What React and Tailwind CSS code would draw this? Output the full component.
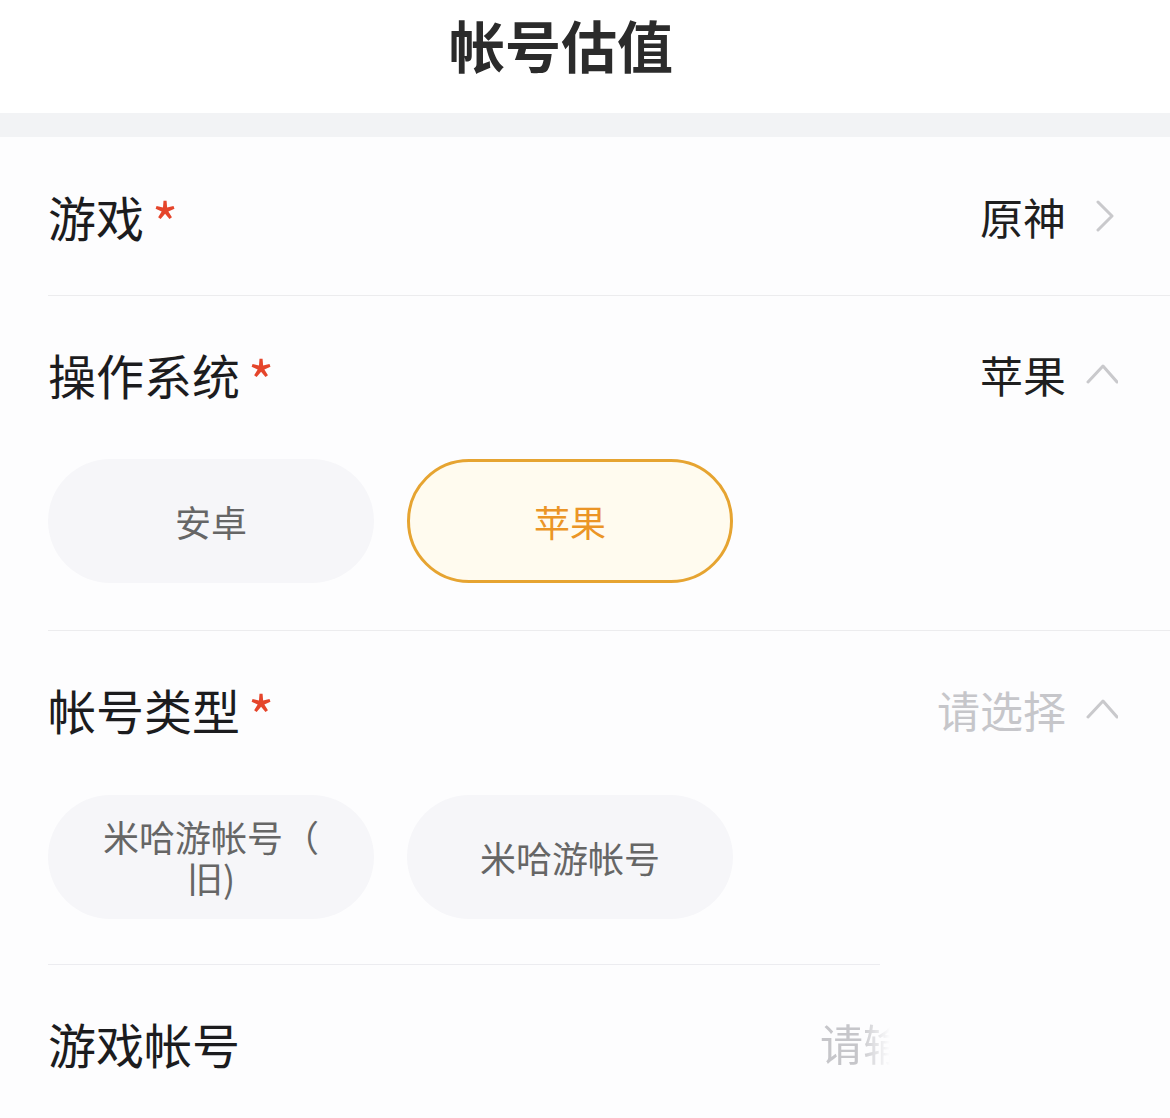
import { useState } from "react"

const ChevronRight = () => (
  <svg width="32" height="32" viewBox="0 0 32 32" fill="none" stroke="#c9c9cc" strokeWidth="3" strokeLinecap="round" strokeLinejoin="round">
    <path d="M12 2 L26 16 L12 30" />
  </svg>
)

const ChevronUp = () => (
  <svg width="32" height="32" viewBox="0 0 32 32" fill="none" stroke="#c9c9cc" strokeWidth="3" strokeLinecap="round" strokeLinejoin="round">
    <path d="M2 24 L17 8 L31 24" />
  </svg>
)

const Label = ({ text, required }) => (
  <div className="flex items-start h-[48px] text-[48px] leading-[48px] text-[#1c1c1e]">
    <span>{text}</span>
    {required && <span className="ml-[8px] mt-[10px] h-[38px] text-[56px] leading-[38px] text-[#e5452b]">*</span>}
  </div>
)

const Pill = ({ children, active, onClick }) => (
  <button
    onClick={onClick}
    className={`w-[326px] h-[124px] rounded-full flex items-center justify-center text-[36px] leading-[41px] text-center ${
      active ? "bg-[#fffbef] border-[3px] border-[#e6a431] text-[#eb9526]" : "bg-[#f6f6f9] text-[#666]"
    }`}
  >
    {children}
  </button>
)

export default function App() {
  const [os, setOs] = useState("苹果")
  const [type, setType] = useState(null)

  return (
    <div className="w-[1170px] h-[1118px] bg-[#fdfdfe] overflow-hidden" style={{ fontFamily: '"Noto Sans CJK SC", "Noto Sans", sans-serif' }}>
      {/* header */}
      <div className="h-[113px] bg-white flex justify-center pt-[12px] pr-[48px]">
        <h1 className="text-[56px] font-bold leading-[64px] text-[#2b2b2b]">帐号估值</h1>
      </div>
      <div className="h-[24px] bg-[#f2f3f5]"></div>

      {/* game */}
      <div className="h-[158px] flex items-center justify-between pl-12 pr-[52px]">
        <Label text="游戏" required />
        <div className="flex items-center gap-[20px]">
          <span className="text-[43px] text-[#1f1f1f]">原神</span>
          <ChevronRight />
        </div>
      </div>
      <div className="ml-12 h-px bg-[#ececee]"></div>

      {/* os */}
      <div className="h-[156px] flex items-center justify-between pl-12 pr-[52px]">
        <Label text="操作系统" required />
        <div className="flex items-center gap-[20px]">
          <span className="text-[43px] text-[#1f1f1f]">{os}</span>
          <ChevronUp />
        </div>
      </div>
      <div className="flex gap-[33px] pl-12 pt-[7px] pb-[47px]">
        {["安卓", "苹果"].map((o) => (
          <Pill key={o} active={os === o} onClick={() => setOs(o)}>{o}</Pill>
        ))}
      </div>
      <div className="ml-12 h-px bg-[#ececee]"></div>

      {/* account type */}
      <div className="h-[156px] flex items-center justify-between pl-12 pr-[52px]">
        <Label text="帐号类型" required />
        <div className="flex items-center gap-[20px]">
          <span className={`text-[43px] ${type ? "text-[#1f1f1f]" : "text-[#c6c6ca]"}`}>{type || "请选择"}</span>
          <ChevronUp />
        </div>
      </div>
      <div className="flex gap-[33px] pl-12 pt-[8px] pb-[45px]">
        <Pill active={type === "old"} onClick={() => setType("old")}>
          <span>米哈游帐号（<br />旧)</span>
        </Pill>
        <Pill active={type === "new"} onClick={() => setType("new")}>米哈游帐号</Pill>
      </div>
      <div className="ml-12 w-[832px] h-px bg-[#ececf0]"></div>

      {/* game account */}
      <div className="h-[155px] flex items-center pl-12">
        <Label text="游戏帐号" />
        <span className="ml-[580px] text-[43px] text-[#c6c6ca] whitespace-nowrap [mask-image:linear-gradient(to_right,black_40px,transparent_70px)]">
          请输入
        </span>
      </div>
    </div>
  )
}
